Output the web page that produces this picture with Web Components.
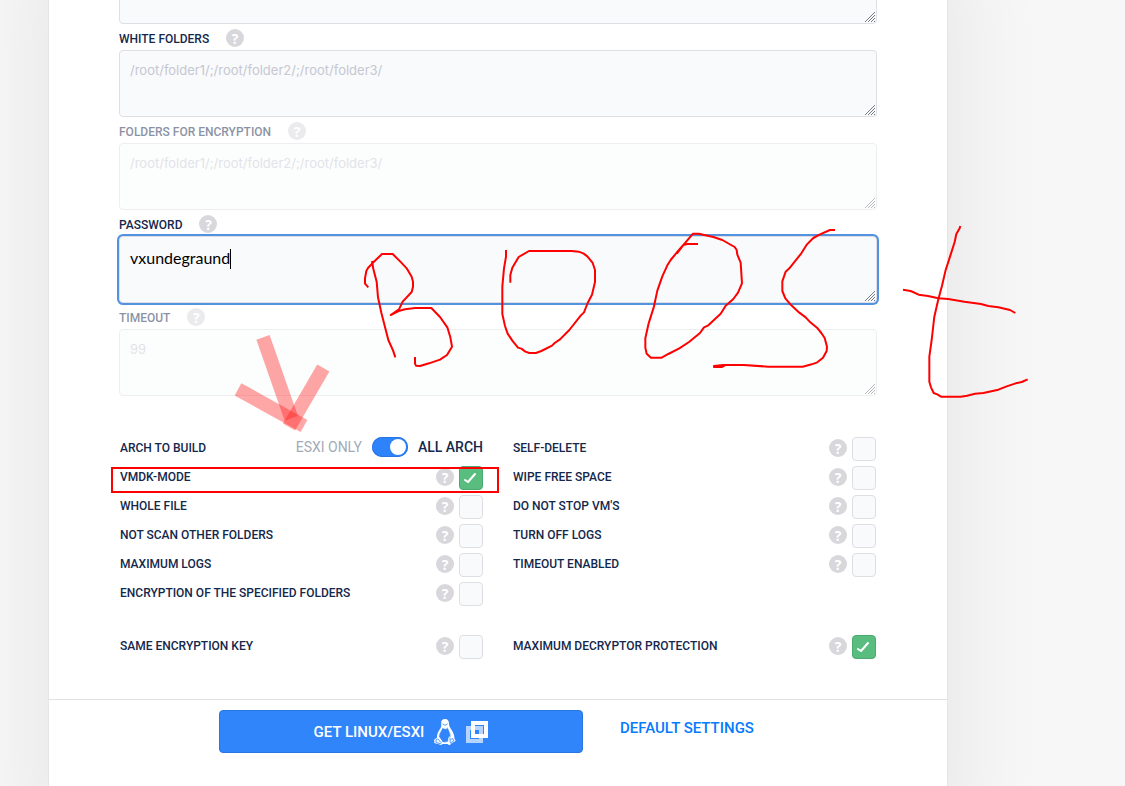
<!DOCTYPE html>
<html lang="en">
<head>
<meta charset="utf-8">
<title>Settings</title>
<style>
  body { margin: 0; background: #f7f7f7; font-family: Roboto, "Liberation Sans", sans-serif; color: #14284b; }
</style>
</head>
<body>
<settings-page>
  <text-field bare></text-field>
  <text-field hint="/root/folder1/;/root/folder2/;/root/folder3/">WHITE FOLDERS</text-field>
  <text-field disabled hint="/root/folder1/;/root/folder2/;/root/folder3/">FOLDERS FOR ENCRYPTION</text-field>
  <text-field active value="vxundegraund">PASSWORD</text-field>
  <text-field disabled hint="99">TIMEOUT</text-field>

  <option-list slot="options">
    <arch-switch slot="left">ARCH TO BUILD</arch-switch>
    <option-row slot="left" checked>VMDK-MODE</option-row>
    <option-row slot="left">WHOLE FILE</option-row>
    <option-row slot="left">NOT SCAN OTHER FOLDERS</option-row>
    <option-row slot="left">MAXIMUM LOGS</option-row>
    <option-row slot="left">ENCRYPTION OF THE SPECIFIED FOLDERS</option-row>
    <option-row slot="right">SELF-DELETE</option-row>
    <option-row slot="right">WIPE FREE SPACE</option-row>
    <option-row slot="right">DO NOT STOP VM'S</option-row>
    <option-row slot="right">TURN OFF LOGS</option-row>
    <option-row slot="right">TIMEOUT ENABLED</option-row>
  </option-list>
  <option-list slot="options">
    <option-row slot="left">SAME ENCRYPTION KEY</option-row>
    <option-row slot="right" checked>MAXIMUM DECRYPTOR PROTECTION</option-row>
  </option-list>

  <action-bar slot="footer"></action-bar>
</settings-page>
<ink-layer></ink-layer>

<script>
const define = (name, html, setup) => {
  const template = document.createElement('template');
  template.innerHTML = html;
  customElements.define(name, class extends HTMLElement {
    constructor() {
      super();
      this.attachShadow({ mode: 'open' }).append(template.content.cloneNode(true));
    }
    connectedCallback() { if (setup) setup(this, this.shadowRoot); }
  });
};

define('help-tip', `
  <style>
    :host { display: block; flex: none; }
    button { display: block; width: 18px; height: 18px; padding: 0; border: 0; border-radius: 50%;
      background: #d8d7dc; color: #fff; font: bold 14px/17px "Open Sans", sans-serif; text-align: center; }
  </style>
  <button type="button">?</button>`);

define('text-field', `
  <style>
    :host { display: block; }
    .head { display: flex; align-items: center; gap: 17px; box-sizing: border-box; height: 26px; padding-top: 2px; }
    label { font-size: 12px; font-weight: 500; line-height: 16px; padding-top: 2px; }
    .box { position: relative; }
    textarea { display: block; box-sizing: border-box; width: 100%; height: 67px; padding: 9px 10px;
      border: 1px solid #dddfe3; border-radius: 4px; background: #f9fafc; resize: none; outline: 0;
      font: 16px/24px Lato, sans-serif; color: #000; }
    textarea::placeholder { font: 13px/20px Inter, sans-serif; color: #c6c7d0; opacity: 1; }
    .grip { position: absolute; right: 2px; bottom: 2px; width: 10px; height: 10px; }
    .caret { display: none; position: absolute; left: 111px; top: 13px; width: 1px; height: 20px; background: #000; }
    :host([bare]) .head { display: none; }
    :host([disabled]) label, :host([disabled]) help-tip, :host([disabled]) .box { opacity: .5; }
    :host([disabled]) textarea { background: #fafdfc; }
    :host([active]) textarea { box-shadow: 0 0 0 2px #5292e0; }
    :host([active]) .caret { display: block; }
  </style>
  <div class="head"><label for="t"><slot></slot></label><help-tip></help-tip></div>
  <div class="box">
    <textarea id="t" spellcheck="false"></textarea>
    <span class="caret"></span>
    <svg class="grip" viewBox="0 0 10 10" fill="none" stroke="#777a80" aria-hidden="true">
      <path d="M0 10 10 0M3 10l7-7M6 10l4-4M9 10l1-1"/>
    </svg>
  </div>`, (host, root) => {
    const t = root.querySelector('textarea');
    t.placeholder = host.getAttribute('hint') || '';
    t.value = host.getAttribute('value') || '';
    t.disabled = host.hasAttribute('disabled');
  });

define('option-row', `
  <style>
    :host { display: flex; align-items: center; height: 24px; }
    label { flex: 1; font-size: 12px; font-weight: 500; line-height: 16px; }
    label, help-tip { padding-bottom: 2px; }
    .tick { position: relative; margin-left: 5px; }
    input { display: block; appearance: none; box-sizing: border-box; width: 24px; height: 24px; margin: 0;
      border: 1px solid #dddfe3; border-radius: 4px; background: #f9fafc; }
    input:checked { background: #5abd80; border-color: #4ca971; }
    svg { display: none; position: absolute; inset: 0; pointer-events: none; }
    input:checked + svg { display: block; }
  </style>
  <label for="c"><slot></slot></label>
  <help-tip></help-tip>
  <span class="tick"><input type="checkbox" id="c">
    <svg width="24" height="24" viewBox="0 0 24 24" fill="none" stroke="#fff" stroke-width="2" stroke-linecap="round" stroke-linejoin="round" aria-hidden="true"><path d="M6 14l3 2 7-8"/></svg>
  </span>`, (host, root) => {
    root.querySelector('input').checked = host.hasAttribute('checked');
  });

define('arch-switch', `
  <style>
    :host { display: flex; align-items: center; justify-content: space-between; height: 24px; }
    .name { font-size: 12px; font-weight: 500; line-height: 16px; padding-bottom: 2px; }
    .choice { display: flex; align-items: center; gap: 10px; height: 20px; margin-bottom: 4px; font-size: 14px; font-weight: 500; line-height: 20px; }
    .off { color: #a2abb8; font-weight: 400; }
    input { appearance: none; width: 36px; height: 20px; margin: 0; border-radius: 10px; background: #2e83fa;
      box-shadow: inset 0 0 0 1px #2776e2; display: flex; align-items: center; justify-content: flex-end; padding: 0 2px; box-sizing: border-box; }
    input::before { content: ""; width: 16px; height: 16px; border-radius: 50%; background: #fff; }
  </style>
  <span class="name"><slot></slot></span>
  <span class="choice"><span class="off">ESXI ONLY</span>
    <input type="checkbox" id="a" role="switch" checked>
    <label for="a">ALL ARCH</label></span>`);

define('option-list', `
  <style>
    :host { display: grid; grid-template-columns: 1fr 1fr; gap: 30px; padding: 0 1px; }
    div { display: flex; flex-direction: column; gap: 5px; }
  </style>
  <div><slot name="left"></slot></div>
  <div><slot name="right"></slot></div>`);

define('action-bar', `
  <style>
    :host { display: grid; grid-template-columns: 364px auto; gap: 37px; padding: 10px 0 80px 170px; justify-content: start; align-items: start; border-top: 1px solid #e0e2e4; }
    button { display: flex; align-items: center; justify-content: center; gap: 10px; height: 43px; padding: 0;
      border: 1px solid #2a76e0; border-radius: 4px; background: #3085fb; color: #fff; font: 500 15px/20px Roboto, sans-serif; }
    a { padding-top: 8px; font-size: 15px; font-weight: 500; line-height: 20px; color: #067bfd; text-decoration: none; }
  </style>
  <button type="button">GET LINUX/ESXI
    <svg width="22" height="26" viewBox="0 0 22 26" aria-hidden="true">
      <path fill="#fff" d="M11 0C8.300 0 7 1.800 7.200 4.500c.1 2.300.1 3.500-1 5.300-1.800 2.600-3.500 5.500-3.200 8.700L1 20c-1 .5-1 1.500-.6 2.500L.3 24c1.700.8 3.700.6 5.700 1.700.9.500 2 .1 2.500-.7h5.200c.5.800 1.600 1.200 2.500.7 1.300-1.700 3.100-2.300 5.200-3.700.5-.5-.4-1.400-1-2.500.1-3.500-1.200-6.500-3.400-9.500-1.500-2-1.900-3.500-2-5.500C14.900 1.600 13.700 0 11 0z"/>
      <path fill="#3085fb" d="M8.600 8.500l2.500 1.200 2.600-1.400c1.200 3.200 2.800 5.200 3.500 8.200.2 1-.2 1.800-1.200 2.200-1 1.200-1 3.200-2.200 4.400-2 1-4 .8-5.600-.1-.2-1.800-2-3.700-3.500-5.500-.2-3.500 2.600-6 3.900-9z" opacity=".35"/>
      <path fill="#3085fb" d="M8.800 9.500c-1.500 3-3.300 5-3.500 8.300l3.600 5c1.600.6 3 .3 3.900-1 .5-4.200-.5-8.500-4-12.300z"/>
      <path fill="#fff" d="M9.300 10.500c-1 2.500-3 4.500-3 7.500l3.200 4.300c2.700.9 4.600.5 5-1.800.5-4-1.500-7.300-5.200-10z"/>
      <path fill="#3085fb" d="M8.600 9.500c3 1 4.400 1 5.100-.6 1 3 2.300 5 2.300 8.100-1.500.4-2 2.200-2.200 5.500l-4.600.4-3.400-5c.2-3 1.800-5.400 2.800-8.400z"/>
      <path fill="none" stroke="#3085fb" stroke-width=".8" d="M8.500 4.800l2.500 1.500 2.700-1.500M2 20.500l1.900-.5 3.200 3.600-.5 1.200-4.500-1.300zM16 19.700l.3 4.400 3.600-2.300-1-2.200-2 .8z"/>
    </svg>
    <svg width="22" height="22" viewBox="0 0 22 22" fill="none" stroke="#fff" stroke-width="4" aria-hidden="true">
      <rect x="2" y="7" width="13" height="13" opacity=".65"/>
      <rect x="7" y="2" width="13" height="13"/>
    </svg>
  </button>
  <a href="#defaults">DEFAULT SETTINGS</a>`);

define('settings-page', `
  <style>
    :host { display: block; height: 100vh; overflow: hidden; padding: 0 177px 0 48px; box-sizing: border-box; }
    main { margin-top: -44px; min-height: calc(100vh + 104px); box-sizing: border-box; background: #fff; border: 1px solid #e4e5e6; border-top: 0;
      box-shadow: 0 0 90px 10px rgba(0, 0, 0, .07); }
    .fields { padding: 1px 70px 41px; }
    .options { display: flex; flex-direction: column; gap: 29px; padding: 0 70px 40px; }
  </style>
  <main>
    <div class="fields"><slot></slot></div>
    <div class="options"><slot name="options"></slot></div>
    <slot name="footer"></slot>
  </main>`);

/* Freehand marks drawn over the form. */
define('ink-layer', `
  <style>
    :host { display: block; position: absolute; left: 0; top: 0; pointer-events: none; }
    svg { display: block; }
  </style>
  <svg width="1125" height="786" viewBox="0 0 1125 786" fill="none" stroke="#f00" aria-hidden="true">
    <g transform="translate(100 210) scale(.33333)" stroke="#ff2020" stroke-opacity=".4" stroke-width="42">
      <path d="M489 382L574 625"/><path d="M414 538L612 648"/><path d="M670 474L567 651"/>
    </g>
    <g stroke-width="6" stroke-linejoin="round">
      <g transform="translate(340 220) scale(.33333)">
        <path d="M85 202L75 191V175L79 153L84 144L97 130L126 102H158L184 128L200 145L215 170L219 185V200L215 216L188 245L177 268L152 285L176 273L195 268L226 264H274L300 291L322 322L331 352L336 380L321 405L300 419L267 430L240 438L228 437L225 431V411"/>
        <path d="M96 123L100 147L110 185L114 232L124 278L145 360L159 391L166 412"/>
        <path d="M498 90V110L492 145L487 200V282L495 318L503 341L517 362L534 383L544 386L556 395L568 399H588L604 393L636 377L644 369L660 358L688 330L722 287L732 277L743 249L756 224L765 186V150L758 129L742 109L730 100L716 95L695 93H567L536 111L517 143L511 165V188"/>
      </g>
      <g transform="translate(620 220) scale(.33333)">
        <path d="M234 72H202L190 75L175 92L152 120L143 134L127 169L112 212L102 259L86 310L76 355V383L80 401L93 413H125L145 402L178 385L207 366L240 339L252 322L265 316L302 281L317 257L340 237L354 218L366 190L362 128L352 104L350 90L344 81L307 60L280 51L236 41H219L191 74L171 100"/>
        <path d="M645 30H630L600 43L580 54L561 73L544 100L508 145L497 155L487 184V213L496 235L514 256L538 278L557 292L571 307L591 323L604 339L614 354L621 380L620 393L609 413L592 427L575 433L548 440H445L370 435H310L282 438V441H305L315 436"/>
      </g>
      <g transform="translate(880 210) scale(.33333)">
        <path d="M241 48L239 55L229 72L224 96L211 137L197 180L186 227L175 268L163 320L155 390L148 440V515L153 532L161 549L172 553L183 560H242L261 557L285 551L310 549L355 539L380 529L407 520L425 516L443 508"/>
        <path d="M69 239L92 243L116 254L144 258L175 265L205 267L253 275L303 282L325 288L355 292L390 300L406 309"/>
      </g>
    </g>
    <rect x="112" y="468" width="386" height="24" stroke-width="2"/>
  </svg>`);
</script>
</body>
</html>
